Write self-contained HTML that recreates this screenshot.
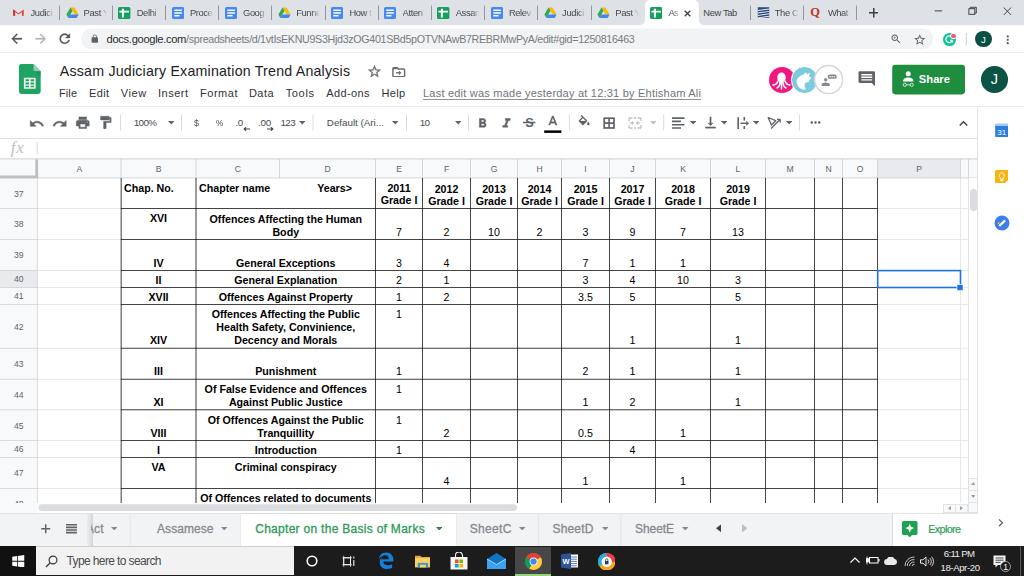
<!DOCTYPE html>
<html lang="en"><head><meta charset="utf-8"><title>Assam Judiciary Examination Trend Analysis - Google Sheets</title>
<style>
*{margin:0;padding:0;box-sizing:border-box}
html,body{width:1024px;height:576px;overflow:hidden;background:#fff}
body{position:relative;font-family:"Liberation Sans",sans-serif;}
div,svg,span.a{position:absolute}
.t{white-space:nowrap}
.b{font-weight:bold}
.c{text-align:center}
</style></head>
<body>
<div id="grid" style="left:0;top:158px;width:978px;height:355px;overflow:hidden;background:#fff">
<div style="left:0px;top:1px;width:978px;height:19px;background:#f8f9fa;"></div>
<div style="left:0px;top:1px;width:37px;height:345px;background:#f8f9fa;"></div>
<div style="left:878px;top:1px;width:82px;height:19px;background:#e8eaed;"></div>
<div style="left:0px;top:113px;width:37px;height:17px;background:#e8eaed;"></div>
<svg style="left:0;top:0" width="978" height="355" viewBox="0 0 978 355" fill="none"><path d="M37.5 50.5H968.5" stroke="#e2e2e2" stroke-width="0.8"/><path d="M37.5 81.5H968.5" stroke="#e2e2e2" stroke-width="0.8"/><path d="M37.5 112.5H968.5" stroke="#e2e2e2" stroke-width="0.8"/><path d="M37.5 129.5H968.5" stroke="#e2e2e2" stroke-width="0.8"/><path d="M37.5 146.5H968.5" stroke="#e2e2e2" stroke-width="0.8"/><path d="M37.5 190.25H968.5" stroke="#e2e2e2" stroke-width="0.8"/><path d="M37.5 221.25H968.5" stroke="#e2e2e2" stroke-width="0.8"/><path d="M37.5 251.75H968.5" stroke="#e2e2e2" stroke-width="0.8"/><path d="M37.5 282.5H968.5" stroke="#e2e2e2" stroke-width="0.8"/><path d="M37.5 299.5H968.5" stroke="#e2e2e2" stroke-width="0.8"/><path d="M37.5 330.5H968.5" stroke="#e2e2e2" stroke-width="0.8"/><path d="M121 20V346" stroke="#e2e2e2" stroke-width="0.8"/><path d="M196 20V346" stroke="#e2e2e2" stroke-width="0.8"/><path d="M375.5 20V346" stroke="#e2e2e2" stroke-width="0.8"/><path d="M422.5 20V346" stroke="#e2e2e2" stroke-width="0.8"/><path d="M470.5 20V346" stroke="#e2e2e2" stroke-width="0.8"/><path d="M517.5 20V346" stroke="#e2e2e2" stroke-width="0.8"/><path d="M561.5 20V346" stroke="#e2e2e2" stroke-width="0.8"/><path d="M609.5 20V346" stroke="#e2e2e2" stroke-width="0.8"/><path d="M655.5 20V346" stroke="#e2e2e2" stroke-width="0.8"/><path d="M710.5 20V346" stroke="#e2e2e2" stroke-width="0.8"/><path d="M765.5 20V346" stroke="#e2e2e2" stroke-width="0.8"/><path d="M814.5 20V346" stroke="#e2e2e2" stroke-width="0.8"/><path d="M842.5 20V346" stroke="#e2e2e2" stroke-width="0.8"/><path d="M877.5 20V346" stroke="#e2e2e2" stroke-width="0.8"/><path d="M960.5 20V346" stroke="#e2e2e2" stroke-width="0.8"/><path d="M968.5 20V346" stroke="#e2e2e2" stroke-width="0.8"/><path d="M0 0.9H978" stroke="#cfcfcf" stroke-width="1"/><path d="M0 19.95H978" stroke="#cccccc" stroke-width="0.8"/><path d="M37.4 1V346" stroke="#d2d2d2" stroke-width="0.8"/><path d="M121 1V20" stroke="#cccccc" stroke-width="0.8"/><path d="M196 1V20" stroke="#cccccc" stroke-width="0.8"/><path d="M279.5 1V20" stroke="#cccccc" stroke-width="0.8"/><path d="M375.5 1V20" stroke="#cccccc" stroke-width="0.8"/><path d="M422.5 1V20" stroke="#cccccc" stroke-width="0.8"/><path d="M470.5 1V20" stroke="#cccccc" stroke-width="0.8"/><path d="M517.5 1V20" stroke="#cccccc" stroke-width="0.8"/><path d="M561.5 1V20" stroke="#cccccc" stroke-width="0.8"/><path d="M609.5 1V20" stroke="#cccccc" stroke-width="0.8"/><path d="M655.5 1V20" stroke="#cccccc" stroke-width="0.8"/><path d="M710.5 1V20" stroke="#cccccc" stroke-width="0.8"/><path d="M765.5 1V20" stroke="#cccccc" stroke-width="0.8"/><path d="M814.5 1V20" stroke="#cccccc" stroke-width="0.8"/><path d="M842.5 1V20" stroke="#cccccc" stroke-width="0.8"/><path d="M877.5 1V20" stroke="#cccccc" stroke-width="0.8"/><path d="M960.5 1V20" stroke="#cccccc" stroke-width="0.8"/><path d="M968.5 1V20" stroke="#cccccc" stroke-width="0.8"/><path d="M0 50.5H37.5" stroke="#d2d2d2" stroke-width="0.8"/><path d="M0 81.5H37.5" stroke="#d2d2d2" stroke-width="0.8"/><path d="M0 112.5H37.5" stroke="#d2d2d2" stroke-width="0.8"/><path d="M0 129.5H37.5" stroke="#d2d2d2" stroke-width="0.8"/><path d="M0 146.5H37.5" stroke="#d2d2d2" stroke-width="0.8"/><path d="M0 190.25H37.5" stroke="#d2d2d2" stroke-width="0.8"/><path d="M0 221.25H37.5" stroke="#d2d2d2" stroke-width="0.8"/><path d="M0 251.75H37.5" stroke="#d2d2d2" stroke-width="0.8"/><path d="M0 282.5H37.5" stroke="#d2d2d2" stroke-width="0.8"/><path d="M0 299.5H37.5" stroke="#d2d2d2" stroke-width="0.8"/><path d="M0 330.5H37.5" stroke="#d2d2d2" stroke-width="0.8"/><path d="M0 18.8H38.2" stroke="#bfbfbf" stroke-width="2.8"/><path d="M36.7 1.3V19.9" stroke="#bfbfbf" stroke-width="2.8"/><path d="M121.2 20V348" stroke="#1a1a1a" stroke-width="0.8"/><path d="M196 20V348" stroke="#1a1a1a" stroke-width="0.8"/><path d="M375.5 20V348" stroke="#1a1a1a" stroke-width="0.8"/><path d="M422.5 20V348" stroke="#1a1a1a" stroke-width="0.8"/><path d="M470.5 20V348" stroke="#1a1a1a" stroke-width="0.8"/><path d="M517.5 20V348" stroke="#1a1a1a" stroke-width="0.8"/><path d="M561.5 20V348" stroke="#1a1a1a" stroke-width="0.8"/><path d="M609.5 20V348" stroke="#1a1a1a" stroke-width="0.8"/><path d="M655.5 20V348" stroke="#1a1a1a" stroke-width="0.8"/><path d="M710.5 20V348" stroke="#1a1a1a" stroke-width="0.8"/><path d="M765.5 20V348" stroke="#1a1a1a" stroke-width="0.8"/><path d="M814.5 20V348" stroke="#1a1a1a" stroke-width="0.8"/><path d="M842.5 20V348" stroke="#1a1a1a" stroke-width="0.8"/><path d="M877.5 20V348" stroke="#1a1a1a" stroke-width="0.8"/><path d="M120.8 50.5H877.9" stroke="#1a1a1a" stroke-width="0.8"/><path d="M120.8 81.5H877.9" stroke="#1a1a1a" stroke-width="0.8"/><path d="M120.8 112.5H877.9" stroke="#1a1a1a" stroke-width="0.8"/><path d="M120.8 129.5H877.9" stroke="#1a1a1a" stroke-width="0.8"/><path d="M120.8 146.5H877.9" stroke="#1a1a1a" stroke-width="0.8"/><path d="M120.8 190.25H877.9" stroke="#1a1a1a" stroke-width="0.8"/><path d="M120.8 221.25H877.9" stroke="#1a1a1a" stroke-width="0.8"/><path d="M120.8 251.75H877.9" stroke="#1a1a1a" stroke-width="0.8"/><path d="M120.8 282.5H877.9" stroke="#1a1a1a" stroke-width="0.8"/><path d="M120.8 299.5H877.9" stroke="#1a1a1a" stroke-width="0.8"/><path d="M120.8 330.5H877.9" stroke="#1a1a1a" stroke-width="0.8"/></svg>
<div class="t" style="left:69.25px;top:6.900000000000006px;font-size:8.6px;color:#5f6368;line-height:8.6px;width:20px;text-align:center;">A</div>
<div class="t" style="left:148.5px;top:6.900000000000006px;font-size:8.6px;color:#5f6368;line-height:8.6px;width:20px;text-align:center;">B</div>
<div class="t" style="left:227.75px;top:6.900000000000006px;font-size:8.6px;color:#5f6368;line-height:8.6px;width:20px;text-align:center;">C</div>
<div class="t" style="left:317.5px;top:6.900000000000006px;font-size:8.6px;color:#5f6368;line-height:8.6px;width:20px;text-align:center;">D</div>
<div class="t" style="left:389.0px;top:6.900000000000006px;font-size:8.6px;color:#5f6368;line-height:8.6px;width:20px;text-align:center;">E</div>
<div class="t" style="left:436.5px;top:6.900000000000006px;font-size:8.6px;color:#5f6368;line-height:8.6px;width:20px;text-align:center;">F</div>
<div class="t" style="left:484.0px;top:6.900000000000006px;font-size:8.6px;color:#5f6368;line-height:8.6px;width:20px;text-align:center;">G</div>
<div class="t" style="left:529.5px;top:6.900000000000006px;font-size:8.6px;color:#5f6368;line-height:8.6px;width:20px;text-align:center;">H</div>
<div class="t" style="left:575.5px;top:6.900000000000006px;font-size:8.6px;color:#5f6368;line-height:8.6px;width:20px;text-align:center;">I</div>
<div class="t" style="left:622.5px;top:6.900000000000006px;font-size:8.6px;color:#5f6368;line-height:8.6px;width:20px;text-align:center;">J</div>
<div class="t" style="left:673.0px;top:6.900000000000006px;font-size:8.6px;color:#5f6368;line-height:8.6px;width:20px;text-align:center;">K</div>
<div class="t" style="left:728.0px;top:6.900000000000006px;font-size:8.6px;color:#5f6368;line-height:8.6px;width:20px;text-align:center;">L</div>
<div class="t" style="left:780.0px;top:6.900000000000006px;font-size:8.6px;color:#5f6368;line-height:8.6px;width:20px;text-align:center;">M</div>
<div class="t" style="left:818.5px;top:6.900000000000006px;font-size:8.6px;color:#5f6368;line-height:8.6px;width:20px;text-align:center;">N</div>
<div class="t" style="left:850.0px;top:6.900000000000006px;font-size:8.6px;color:#5f6368;line-height:8.6px;width:20px;text-align:center;">O</div>
<div class="t" style="left:909.0px;top:6.900000000000006px;font-size:8.6px;color:#5f6368;line-height:8.6px;width:20px;text-align:center;">P</div>
<div class="t" style="left:0px;top:31.650000000000006px;font-size:8.6px;color:#5f6368;line-height:8.6px;width:37.5px;text-align:center;">37</div>
<div class="t" style="left:0px;top:62.400000000000006px;font-size:8.6px;color:#5f6368;line-height:8.6px;width:37.5px;text-align:center;">38</div>
<div class="t" style="left:0px;top:93.4px;font-size:8.6px;color:#5f6368;line-height:8.6px;width:37.5px;text-align:center;">39</div>
<div class="t" style="left:0px;top:117.39999999999998px;font-size:8.6px;color:#5f6368;line-height:8.6px;width:37.5px;text-align:center;">40</div>
<div class="t" style="left:0px;top:134.39999999999998px;font-size:8.6px;color:#5f6368;line-height:8.6px;width:37.5px;text-align:center;">41</div>
<div class="t" style="left:0px;top:164.77499999999998px;font-size:8.6px;color:#5f6368;line-height:8.6px;width:37.5px;text-align:center;">42</div>
<div class="t" style="left:0px;top:202.14999999999998px;font-size:8.6px;color:#5f6368;line-height:8.6px;width:37.5px;text-align:center;">43</div>
<div class="t" style="left:0px;top:232.89999999999998px;font-size:8.6px;color:#5f6368;line-height:8.6px;width:37.5px;text-align:center;">44</div>
<div class="t" style="left:0px;top:263.525px;font-size:8.6px;color:#5f6368;line-height:8.6px;width:37.5px;text-align:center;">45</div>
<div class="t" style="left:0px;top:287.4px;font-size:8.6px;color:#5f6368;line-height:8.6px;width:37.5px;text-align:center;">46</div>
<div class="t" style="left:0px;top:311.4px;font-size:8.6px;color:#5f6368;line-height:8.6px;width:37.5px;text-align:center;">47</div>
<div class="t" style="left:0px;top:342.4px;font-size:8.6px;color:#5f6368;line-height:8.6px;width:37.5px;text-align:center;">48</div>
<div class="t" style="left:124px;top:23.902845000000013px;font-size:10.67px;color:#000;line-height:12.6px;font-weight:bold;white-space:pre;">Chap. No.</div>
<div class="t" style="left:199px;top:23.902845000000013px;font-size:10.67px;color:#000;line-height:12.6px;font-weight:bold;white-space:pre;">Chapter name                Years&gt;</div>
<div class="t" style="left:375.5px;top:23.902845000000013px;font-size:10.67px;color:#000;line-height:12.6px;width:47.0px;text-align:center;font-weight:bold;white-space:pre;">2011<br>Grade I</div>
<div class="t" style="left:422.5px;top:24.602845000000002px;font-size:10.67px;color:#000;line-height:12.6px;width:48.0px;text-align:center;font-weight:bold;white-space:pre;">2012<br>Grade I</div>
<div class="t" style="left:470.5px;top:24.602845000000002px;font-size:10.67px;color:#000;line-height:12.6px;width:47.0px;text-align:center;font-weight:bold;white-space:pre;">2013<br>Grade I</div>
<div class="t" style="left:517.5px;top:24.602845000000002px;font-size:10.67px;color:#000;line-height:12.6px;width:44.0px;text-align:center;font-weight:bold;white-space:pre;">2014<br>Grade I</div>
<div class="t" style="left:561.5px;top:24.602845000000002px;font-size:10.67px;color:#000;line-height:12.6px;width:48.0px;text-align:center;font-weight:bold;white-space:pre;">2015<br>Grade I</div>
<div class="t" style="left:609.5px;top:24.602845000000002px;font-size:10.67px;color:#000;line-height:12.6px;width:46.0px;text-align:center;font-weight:bold;white-space:pre;">2017<br>Grade I</div>
<div class="t" style="left:655.5px;top:24.602845000000002px;font-size:10.67px;color:#000;line-height:12.6px;width:55.0px;text-align:center;font-weight:bold;white-space:pre;">2018<br>Grade I</div>
<div class="t" style="left:710.5px;top:24.602845000000002px;font-size:10.67px;color:#000;line-height:12.6px;width:55.0px;text-align:center;font-weight:bold;white-space:pre;">2019<br>Grade I</div>
<div class="t" style="left:121px;top:54.40284500000001px;font-size:10.67px;color:#000;line-height:12.6px;width:75px;text-align:center;font-weight:bold;white-space:pre;">XVI</div>
<div class="t" style="left:196px;top:55.00284500000001px;font-size:10.67px;color:#000;line-height:12.6px;width:179.5px;text-align:center;font-weight:bold;white-space:pre;">Offences Affecting the Human<br>Body</div>
<div class="t" style="left:121px;top:98.602845px;font-size:10.67px;color:#000;line-height:12.6px;width:75px;text-align:center;font-weight:bold;white-space:pre;">IV</div>
<div class="t" style="left:196px;top:98.602845px;font-size:10.67px;color:#000;line-height:12.6px;width:179.5px;text-align:center;font-weight:bold;white-space:pre;">General Exceptions</div>
<div class="t" style="left:121px;top:115.602845px;font-size:10.67px;color:#000;line-height:12.6px;width:75px;text-align:center;font-weight:bold;white-space:pre;">II</div>
<div class="t" style="left:196px;top:115.602845px;font-size:10.67px;color:#000;line-height:12.6px;width:179.5px;text-align:center;font-weight:bold;white-space:pre;">General Explanation</div>
<div class="t" style="left:121px;top:132.602845px;font-size:10.67px;color:#000;line-height:12.6px;width:75px;text-align:center;font-weight:bold;white-space:pre;">XVII</div>
<div class="t" style="left:196px;top:132.602845px;font-size:10.67px;color:#000;line-height:12.6px;width:179.5px;text-align:center;font-weight:bold;white-space:pre;">Offences Against Property</div>
<div class="t" style="left:121px;top:176.352845px;font-size:10.67px;color:#000;line-height:12.6px;width:75px;text-align:center;font-weight:bold;white-space:pre;">XIV</div>
<div class="t" style="left:196px;top:149.85284500000006px;font-size:10.67px;color:#000;line-height:13.2px;width:179.5px;text-align:center;font-weight:bold;white-space:pre;">Offences Affecting the Public<br>Health Safety, Convinience,<br>Decency and Morals</div>
<div class="t" style="left:121px;top:207.352845px;font-size:10.67px;color:#000;line-height:12.6px;width:75px;text-align:center;font-weight:bold;white-space:pre;">III</div>
<div class="t" style="left:196px;top:207.352845px;font-size:10.67px;color:#000;line-height:12.6px;width:179.5px;text-align:center;font-weight:bold;white-space:pre;">Punishment</div>
<div class="t" style="left:121px;top:237.852845px;font-size:10.67px;color:#000;line-height:12.6px;width:75px;text-align:center;font-weight:bold;white-space:pre;">XI</div>
<div class="t" style="left:196px;top:225.25284499999998px;font-size:10.67px;color:#000;line-height:12.6px;width:179.5px;text-align:center;font-weight:bold;white-space:pre;">Of False Evidence and Offences<br>Against Public Justice</div>
<div class="t" style="left:121px;top:268.602845px;font-size:10.67px;color:#000;line-height:12.6px;width:75px;text-align:center;font-weight:bold;white-space:pre;">VIII</div>
<div class="t" style="left:196px;top:256.002845px;font-size:10.67px;color:#000;line-height:12.6px;width:179.5px;text-align:center;font-weight:bold;white-space:pre;">Of Offences Against the Public<br>Tranquillity</div>
<div class="t" style="left:121px;top:285.602845px;font-size:10.67px;color:#000;line-height:12.6px;width:75px;text-align:center;font-weight:bold;white-space:pre;">I</div>
<div class="t" style="left:196px;top:285.602845px;font-size:10.67px;color:#000;line-height:12.6px;width:179.5px;text-align:center;font-weight:bold;white-space:pre;">Introduction</div>
<div class="t" style="left:121px;top:303.40284499999996px;font-size:10.67px;color:#000;line-height:12.6px;width:75px;text-align:center;font-weight:bold;white-space:pre;">VA</div>
<div class="t" style="left:196px;top:303.40284499999996px;font-size:10.67px;color:#000;line-height:12.6px;width:179.5px;text-align:center;font-weight:bold;white-space:pre;">Criminal conspiracy</div>
<div class="t" style="left:196px;top:334.40284499999996px;font-size:10.67px;color:#000;line-height:12.6px;width:179.5px;text-align:center;font-weight:bold;white-space:pre;">Of Offences related to documents</div>
<div class="t" style="left:375.5px;top:67.602845px;font-size:10.67px;color:#000;line-height:12.6px;width:47.0px;text-align:center;white-space:pre;">7</div>
<div class="t" style="left:422.5px;top:67.602845px;font-size:10.67px;color:#000;line-height:12.6px;width:48.0px;text-align:center;white-space:pre;">2</div>
<div class="t" style="left:470.5px;top:67.602845px;font-size:10.67px;color:#000;line-height:12.6px;width:47.0px;text-align:center;white-space:pre;">10</div>
<div class="t" style="left:517.5px;top:67.602845px;font-size:10.67px;color:#000;line-height:12.6px;width:44.0px;text-align:center;white-space:pre;">2</div>
<div class="t" style="left:561.5px;top:67.602845px;font-size:10.67px;color:#000;line-height:12.6px;width:48.0px;text-align:center;white-space:pre;">3</div>
<div class="t" style="left:609.5px;top:67.602845px;font-size:10.67px;color:#000;line-height:12.6px;width:46.0px;text-align:center;white-space:pre;">9</div>
<div class="t" style="left:655.5px;top:67.602845px;font-size:10.67px;color:#000;line-height:12.6px;width:55.0px;text-align:center;white-space:pre;">7</div>
<div class="t" style="left:710.5px;top:67.602845px;font-size:10.67px;color:#000;line-height:12.6px;width:55.0px;text-align:center;white-space:pre;">13</div>
<div class="t" style="left:375.5px;top:98.602845px;font-size:10.67px;color:#000;line-height:12.6px;width:47.0px;text-align:center;white-space:pre;">3</div>
<div class="t" style="left:422.5px;top:98.602845px;font-size:10.67px;color:#000;line-height:12.6px;width:48.0px;text-align:center;white-space:pre;">4</div>
<div class="t" style="left:561.5px;top:98.602845px;font-size:10.67px;color:#000;line-height:12.6px;width:48.0px;text-align:center;white-space:pre;">7</div>
<div class="t" style="left:609.5px;top:98.602845px;font-size:10.67px;color:#000;line-height:12.6px;width:46.0px;text-align:center;white-space:pre;">1</div>
<div class="t" style="left:655.5px;top:98.602845px;font-size:10.67px;color:#000;line-height:12.6px;width:55.0px;text-align:center;white-space:pre;">1</div>
<div class="t" style="left:375.5px;top:115.602845px;font-size:10.67px;color:#000;line-height:12.6px;width:47.0px;text-align:center;white-space:pre;">2</div>
<div class="t" style="left:422.5px;top:115.602845px;font-size:10.67px;color:#000;line-height:12.6px;width:48.0px;text-align:center;white-space:pre;">1</div>
<div class="t" style="left:561.5px;top:115.602845px;font-size:10.67px;color:#000;line-height:12.6px;width:48.0px;text-align:center;white-space:pre;">3</div>
<div class="t" style="left:609.5px;top:115.602845px;font-size:10.67px;color:#000;line-height:12.6px;width:46.0px;text-align:center;white-space:pre;">4</div>
<div class="t" style="left:655.5px;top:115.602845px;font-size:10.67px;color:#000;line-height:12.6px;width:55.0px;text-align:center;white-space:pre;">10</div>
<div class="t" style="left:710.5px;top:115.602845px;font-size:10.67px;color:#000;line-height:12.6px;width:55.0px;text-align:center;white-space:pre;">3</div>
<div class="t" style="left:375.5px;top:132.602845px;font-size:10.67px;color:#000;line-height:12.6px;width:47.0px;text-align:center;white-space:pre;">1</div>
<div class="t" style="left:422.5px;top:132.602845px;font-size:10.67px;color:#000;line-height:12.6px;width:48.0px;text-align:center;white-space:pre;">2</div>
<div class="t" style="left:561.5px;top:132.602845px;font-size:10.67px;color:#000;line-height:12.6px;width:48.0px;text-align:center;white-space:pre;">3.5</div>
<div class="t" style="left:609.5px;top:132.602845px;font-size:10.67px;color:#000;line-height:12.6px;width:46.0px;text-align:center;white-space:pre;">5</div>
<div class="t" style="left:710.5px;top:132.602845px;font-size:10.67px;color:#000;line-height:12.6px;width:55.0px;text-align:center;white-space:pre;">5</div>
<div class="t" style="left:375.5px;top:150.40284499999996px;font-size:10.67px;color:#000;line-height:12.6px;width:47.0px;text-align:center;white-space:pre;">1</div>
<div class="t" style="left:609.5px;top:176.352845px;font-size:10.67px;color:#000;line-height:12.6px;width:46.0px;text-align:center;white-space:pre;">1</div>
<div class="t" style="left:710.5px;top:176.352845px;font-size:10.67px;color:#000;line-height:12.6px;width:55.0px;text-align:center;white-space:pre;">1</div>
<div class="t" style="left:375.5px;top:207.352845px;font-size:10.67px;color:#000;line-height:12.6px;width:47.0px;text-align:center;white-space:pre;">1</div>
<div class="t" style="left:561.5px;top:207.352845px;font-size:10.67px;color:#000;line-height:12.6px;width:48.0px;text-align:center;white-space:pre;">2</div>
<div class="t" style="left:609.5px;top:207.352845px;font-size:10.67px;color:#000;line-height:12.6px;width:46.0px;text-align:center;white-space:pre;">1</div>
<div class="t" style="left:710.5px;top:207.352845px;font-size:10.67px;color:#000;line-height:12.6px;width:55.0px;text-align:center;white-space:pre;">1</div>
<div class="t" style="left:375.5px;top:225.15284499999996px;font-size:10.67px;color:#000;line-height:12.6px;width:47.0px;text-align:center;white-space:pre;">1</div>
<div class="t" style="left:561.5px;top:237.852845px;font-size:10.67px;color:#000;line-height:12.6px;width:48.0px;text-align:center;white-space:pre;">1</div>
<div class="t" style="left:609.5px;top:237.852845px;font-size:10.67px;color:#000;line-height:12.6px;width:46.0px;text-align:center;white-space:pre;">2</div>
<div class="t" style="left:710.5px;top:237.852845px;font-size:10.67px;color:#000;line-height:12.6px;width:55.0px;text-align:center;white-space:pre;">1</div>
<div class="t" style="left:375.5px;top:255.65284499999996px;font-size:10.67px;color:#000;line-height:12.6px;width:47.0px;text-align:center;white-space:pre;">1</div>
<div class="t" style="left:422.5px;top:268.602845px;font-size:10.67px;color:#000;line-height:12.6px;width:48.0px;text-align:center;white-space:pre;">2</div>
<div class="t" style="left:561.5px;top:268.602845px;font-size:10.67px;color:#000;line-height:12.6px;width:48.0px;text-align:center;white-space:pre;">0.5</div>
<div class="t" style="left:655.5px;top:268.602845px;font-size:10.67px;color:#000;line-height:12.6px;width:55.0px;text-align:center;white-space:pre;">1</div>
<div class="t" style="left:375.5px;top:285.602845px;font-size:10.67px;color:#000;line-height:12.6px;width:47.0px;text-align:center;white-space:pre;">1</div>
<div class="t" style="left:609.5px;top:285.602845px;font-size:10.67px;color:#000;line-height:12.6px;width:46.0px;text-align:center;white-space:pre;">4</div>
<div class="t" style="left:422.5px;top:316.602845px;font-size:10.67px;color:#000;line-height:12.6px;width:48.0px;text-align:center;white-space:pre;">4</div>
<div class="t" style="left:561.5px;top:316.602845px;font-size:10.67px;color:#000;line-height:12.6px;width:48.0px;text-align:center;white-space:pre;">1</div>
<div class="t" style="left:655.5px;top:316.602845px;font-size:10.67px;color:#000;line-height:12.6px;width:55.0px;text-align:center;white-space:pre;">1</div>
<svg style="left:870px;top:105px" width="100" height="30" viewBox="0 0 100 30" fill="none"><rect x="7.700" y="7.600" width="82.800" height="16.900" stroke="#1a73e8" stroke-width="1.600"/><rect x="86.600" y="21.100" width="6.600" height="6.600" fill="#fff"/><rect x="87.300" y="21.800" width="5.400" height="5.400" fill="#1a73e8"/></svg>
<div style="left:0px;top:345px;width:978px;height:10px;background:#fff;"></div>
<div style="left:968px;top:20px;width:10px;height:326px;background:#fff;border-left:1px solid #e6e6e6;"></div>
<div style="left:969.5px;top:31px;width:7px;height:22px;background:#dadce0;border-radius:4px;"></div>
<svg style="left:38px;top:345px" width="482" height="10" viewBox="0 0 482 10"><rect x="0.500" y="1.300" width="478.500" height="6.600" rx="3.300" fill="#dadce0"/></svg>
<div style="left:0px;top:345px;width:37px;height:10px;background:#f8f9fa;"></div>
</div>
<div style="left:0px;top:0px;width:1024px;height:25px;background:#dee1e6;"></div>
<div style="left:0px;top:25px;width:1024px;height:1px;background:#f9fafb;"></div>
<div style="left:0px;top:26px;width:1024px;height:27px;background:#fff;"></div>
<div style="left:0px;top:52px;width:1024px;height:1px;background:#ebecee;"></div>
<div style="left:977px;top:107px;width:47px;height:439px;background:#fff;border-left:1px solid #e3e4e6;"></div>
<div style="left:0px;top:106px;width:1024px;height:1px;background:#e8eaed;"></div>
<div style="left:0px;top:138px;width:978px;height:1px;background:#e1e2e4;"></div>
<div style="left:0px;top:513px;width:978px;height:33px;background:#f1f3f4;border-top:1px solid #e3e4e6;"></div>
<div style="left:0px;top:546px;width:1024px;height:30px;background:#1c1c1c;"></div>
<svg style="left:639.0px;top:0px;" width="65.8" height="26" viewBox="0 0 65.8 26"><path d="M0 25 Q6 25 6 19 V5.500 Q6 0 11.500 0 H54.3 Q59.8 0 59.8 5.500 V19 Q59.8 25 65.8 25 V26 H0 Z" fill="#fff"/></svg>
<svg style="left:12.399999999999999px;top:6px;" width="13" height="13" viewBox="0 0 16 16"><path d="M1.5 12V4.2L8 9l6.500-4.800V12h-2.300V7.300L8 10.600 3.800 7.300V12z" fill="#ea4335"/><path d="M1.500 4.200V12h2.300V5.600z" fill="#d93025"/></svg>
<div class="t" style="left:30.4px;top:7.24px;font-size:9.4px;color:#45494d;line-height:11.4px;letter-spacing:-0.312px;overflow:hidden;width:22.9px;height:14px;-webkit-mask-image:linear-gradient(90deg,#000 0,#000 15.9px,transparent 23.9px);mask-image:linear-gradient(90deg,#000 0,#000 15.9px,transparent 23.9px);">Judici</div>
<svg style="left:57.8px;top:5px;" width="3" height="16" viewBox="0 0 3 16"><path d="M1.500 0.600V15" stroke="#8a8d93" stroke-width="0.900"/></svg>
<svg style="left:65.57000000000001px;top:6px;" width="13" height="13" viewBox="0 0 16 17"><path d="M5.400 1.800h5.200L16 11.200h-5.200z" fill="#fbbc04"/><path d="M5.400 1.800L0 11.200l2.600 4.500L8 6.300z" fill="#34a853"/><path d="M2.600 15.700h10.800l2.600-4.500H5.200z" fill="#4285f4"/></svg>
<div class="t" style="left:83.6px;top:7.24px;font-size:9.4px;color:#45494d;line-height:11.4px;letter-spacing:-0.358px;overflow:hidden;width:22.9px;height:14px;-webkit-mask-image:linear-gradient(90deg,#000 0,#000 15.9px,transparent 23.9px);mask-image:linear-gradient(90deg,#000 0,#000 15.9px,transparent 23.9px);">Past Y</div>
<svg style="left:110.9px;top:5px;" width="3" height="16" viewBox="0 0 3 16"><path d="M1.500 0.600V15" stroke="#8a8d93" stroke-width="0.900"/></svg>
<svg style="left:118.33999999999999px;top:6.8px;" width="12.4" height="12" viewBox="0 0 12.400 12"><rect x="0" y="0" width="12.400" height="12" rx="1.600" fill="#16a05d"/><path d="M3.900 1.700h2v2.100h5v1.800h-5v4.800h-2V5.600H1.400V3.800h2.500z" fill="#fff"/></svg>
<div class="t" style="left:136.7px;top:7.24px;font-size:9.4px;color:#45494d;line-height:11.4px;letter-spacing:-0.348px;overflow:hidden;width:22.9px;height:14px;-webkit-mask-image:linear-gradient(90deg,#000 0,#000 15.9px,transparent 23.9px);mask-image:linear-gradient(90deg,#000 0,#000 15.9px,transparent 23.9px);">Delhi</div>
<svg style="left:164.1px;top:5px;" width="3" height="16" viewBox="0 0 3 16"><path d="M1.500 0.600V15" stroke="#8a8d93" stroke-width="0.900"/></svg>
<svg style="left:171.51px;top:6.8px;" width="12.2" height="12" viewBox="0 0 12.200 12"><rect x="0" y="0" width="12.200" height="12" rx="1.600" fill="#4688f4"/><path d="M2.300 2.500h7.600v1.500H2.300z M2.300 5.250h7.600v1.500H2.300z M2.300 8h5.200v1.500H2.300z" fill="#fff"/></svg>
<div class="t" style="left:189.9px;top:7.24px;font-size:9.4px;color:#45494d;line-height:11.4px;letter-spacing:-0.399px;overflow:hidden;width:22.9px;height:14px;-webkit-mask-image:linear-gradient(90deg,#000 0,#000 15.9px,transparent 23.9px);mask-image:linear-gradient(90deg,#000 0,#000 15.9px,transparent 23.9px);">Proce</div>
<svg style="left:217.3px;top:5px;" width="3" height="16" viewBox="0 0 3 16"><path d="M1.500 0.600V15" stroke="#8a8d93" stroke-width="0.900"/></svg>
<svg style="left:224.68px;top:6.8px;" width="12.2" height="12" viewBox="0 0 12.200 12"><rect x="0" y="0" width="12.200" height="12" rx="1.600" fill="#4688f4"/><path d="M2.300 2.500h7.600v1.500H2.300z M2.300 5.250h7.600v1.500H2.300z M2.300 8h5.200v1.500H2.300z" fill="#fff"/></svg>
<div class="t" style="left:243.1px;top:7.24px;font-size:9.4px;color:#45494d;line-height:11.4px;letter-spacing:-0.498px;overflow:hidden;width:22.9px;height:14px;-webkit-mask-image:linear-gradient(90deg,#000 0,#000 15.9px,transparent 23.9px);mask-image:linear-gradient(90deg,#000 0,#000 15.9px,transparent 23.9px);">Goog</div>
<svg style="left:270.4px;top:5px;" width="3" height="16" viewBox="0 0 3 16"><path d="M1.500 0.600V15" stroke="#8a8d93" stroke-width="0.900"/></svg>
<svg style="left:278.25000000000006px;top:6px;" width="13" height="13" viewBox="0 0 16 17"><path d="M5.400 1.800h5.200L16 11.200h-5.200z" fill="#fbbc04"/><path d="M5.400 1.800L0 11.200l2.600 4.500L8 6.300z" fill="#34a853"/><path d="M2.600 15.700h10.800l2.600-4.500H5.200z" fill="#4285f4"/></svg>
<div class="t" style="left:296.3px;top:7.24px;font-size:9.4px;color:#45494d;line-height:11.4px;letter-spacing:-0.433px;overflow:hidden;width:22.9px;height:14px;-webkit-mask-image:linear-gradient(90deg,#000 0,#000 15.9px,transparent 23.9px);mask-image:linear-gradient(90deg,#000 0,#000 15.9px,transparent 23.9px);">Funne</div>
<svg style="left:323.6px;top:5px;" width="3" height="16" viewBox="0 0 3 16"><path d="M1.500 0.600V15" stroke="#8a8d93" stroke-width="0.900"/></svg>
<svg style="left:331.02000000000004px;top:6.8px;" width="12.2" height="12" viewBox="0 0 12.200 12"><rect x="0" y="0" width="12.200" height="12" rx="1.600" fill="#4688f4"/><path d="M2.300 2.500h7.600v1.500H2.300z M2.300 5.250h7.600v1.500H2.300z M2.300 8h5.200v1.500H2.300z" fill="#fff"/></svg>
<div class="t" style="left:349.4px;top:7.24px;font-size:9.4px;color:#45494d;line-height:11.4px;letter-spacing:-0.39px;overflow:hidden;width:22.9px;height:14px;-webkit-mask-image:linear-gradient(90deg,#000 0,#000 15.9px,transparent 23.9px);mask-image:linear-gradient(90deg,#000 0,#000 15.9px,transparent 23.9px);">How t</div>
<svg style="left:376.8px;top:5px;" width="3" height="16" viewBox="0 0 3 16"><path d="M1.500 0.600V15" stroke="#8a8d93" stroke-width="0.900"/></svg>
<svg style="left:384.19000000000005px;top:6.8px;" width="12.2" height="12" viewBox="0 0 12.200 12"><rect x="0" y="0" width="12.200" height="12" rx="1.600" fill="#4688f4"/><path d="M2.300 2.500h7.600v1.500H2.300z M2.300 5.250h7.600v1.500H2.300z M2.300 8h5.200v1.500H2.300z" fill="#fff"/></svg>
<div class="t" style="left:402.6px;top:7.24px;font-size:9.4px;color:#45494d;line-height:11.4px;letter-spacing:-0.357px;overflow:hidden;width:22.9px;height:14px;-webkit-mask-image:linear-gradient(90deg,#000 0,#000 15.9px,transparent 23.9px);mask-image:linear-gradient(90deg,#000 0,#000 15.9px,transparent 23.9px);">Atten</div>
<svg style="left:430.0px;top:5px;" width="3" height="16" viewBox="0 0 3 16"><path d="M1.500 0.600V15" stroke="#8a8d93" stroke-width="0.900"/></svg>
<svg style="left:437.36000000000007px;top:6.8px;" width="12.4" height="12" viewBox="0 0 12.400 12"><rect x="0" y="0" width="12.400" height="12" rx="1.600" fill="#16a05d"/><path d="M3.900 1.700h2v2.100h5v1.800h-5v4.800h-2V5.600H1.400V3.800h2.500z" fill="#fff"/></svg>
<div class="t" style="left:455.8px;top:7.24px;font-size:9.4px;color:#45494d;line-height:11.4px;letter-spacing:-0.425px;overflow:hidden;width:22.9px;height:14px;-webkit-mask-image:linear-gradient(90deg,#000 0,#000 15.9px,transparent 23.9px);mask-image:linear-gradient(90deg,#000 0,#000 15.9px,transparent 23.9px);">Assan</div>
<svg style="left:483.1px;top:5px;" width="3" height="16" viewBox="0 0 3 16"><path d="M1.500 0.600V15" stroke="#8a8d93" stroke-width="0.900"/></svg>
<svg style="left:490.5300000000001px;top:6.8px;" width="12.2" height="12" viewBox="0 0 12.200 12"><rect x="0" y="0" width="12.200" height="12" rx="1.600" fill="#4688f4"/><path d="M2.300 2.500h7.600v1.500H2.300z M2.300 5.250h7.600v1.500H2.300z M2.300 8h5.200v1.500H2.300z" fill="#fff"/></svg>
<div class="t" style="left:508.9px;top:7.24px;font-size:9.4px;color:#45494d;line-height:11.4px;letter-spacing:-0.391px;overflow:hidden;width:22.9px;height:14px;-webkit-mask-image:linear-gradient(90deg,#000 0,#000 15.9px,transparent 23.9px);mask-image:linear-gradient(90deg,#000 0,#000 15.9px,transparent 23.9px);">Relev</div>
<svg style="left:536.3px;top:5px;" width="3" height="16" viewBox="0 0 3 16"><path d="M1.500 0.600V15" stroke="#8a8d93" stroke-width="0.900"/></svg>
<svg style="left:544.1px;top:6px;" width="13" height="13" viewBox="0 0 16 17"><path d="M5.400 1.800h5.200L16 11.200h-5.200z" fill="#fbbc04"/><path d="M5.400 1.800L0 11.200l2.600 4.500L8 6.300z" fill="#34a853"/><path d="M2.600 15.700h10.800l2.600-4.500H5.200z" fill="#4285f4"/></svg>
<div class="t" style="left:562.1px;top:7.24px;font-size:9.4px;color:#45494d;line-height:11.4px;letter-spacing:-0.312px;overflow:hidden;width:22.9px;height:14px;-webkit-mask-image:linear-gradient(90deg,#000 0,#000 15.9px,transparent 23.9px);mask-image:linear-gradient(90deg,#000 0,#000 15.9px,transparent 23.9px);">Judici</div>
<svg style="left:589.5px;top:5px;" width="3" height="16" viewBox="0 0 3 16"><path d="M1.500 0.600V15" stroke="#8a8d93" stroke-width="0.900"/></svg>
<svg style="left:597.27px;top:6px;" width="13" height="13" viewBox="0 0 16 17"><path d="M5.400 1.800h5.200L16 11.200h-5.200z" fill="#fbbc04"/><path d="M5.400 1.800L0 11.200l2.600 4.500L8 6.300z" fill="#34a853"/><path d="M2.600 15.700h10.800l2.600-4.500H5.200z" fill="#4285f4"/></svg>
<div class="t" style="left:615.3px;top:7.24px;font-size:9.4px;color:#45494d;line-height:11.4px;letter-spacing:-0.358px;overflow:hidden;width:22.9px;height:14px;-webkit-mask-image:linear-gradient(90deg,#000 0,#000 15.9px,transparent 23.9px);mask-image:linear-gradient(90deg,#000 0,#000 15.9px,transparent 23.9px);">Past Y</div>
<svg style="left:650.04px;top:6.8px;" width="12.4" height="12" viewBox="0 0 12.400 12"><rect x="0" y="0" width="12.400" height="12" rx="1.600" fill="#16a05d"/><path d="M3.900 1.700h2v2.100h5v1.800h-5v4.800h-2V5.600H1.400V3.800h2.500z" fill="#fff"/></svg>
<div class="t" style="left:668.4px;top:7.24px;font-size:9.4px;color:#45494d;line-height:11.4px;letter-spacing:-0.713px;overflow:hidden;width:12.0px;height:14px;-webkit-mask-image:linear-gradient(90deg,#000 0,#000 5.0px,transparent 13.0px);mask-image:linear-gradient(90deg,#000 0,#000 5.0px,transparent 13.0px);">As</div>
<div class="t" style="left:703.3px;top:7.24px;font-size:9.4px;color:#45494d;line-height:11.4px;letter-spacing:-0.4px;">New Tab</div>
<svg style="left:749.0px;top:5px;" width="3" height="16" viewBox="0 0 3 16"><path d="M1.500 0.600V15" stroke="#8a8d93" stroke-width="0.900"/></svg>
<svg style="left:756.78px;top:6px;" width="13" height="13" viewBox="0 0 16 16"><rect x="1" y="1.500" width="14" height="13" fill="#2d4a7c"/><path d="M1 5l14-2v1.200l-14 2z M1 8l14-2v1.200l-14 2z M1 11l14-2v1.200l-14 2z M1 14l14-2v1.200l-14 2z" fill="#e8edf5"/></svg>
<div class="t" style="left:774.8px;top:7.24px;font-size:9.4px;color:#45494d;line-height:11.4px;letter-spacing:-0.416px;overflow:hidden;width:22.9px;height:14px;-webkit-mask-image:linear-gradient(90deg,#000 0,#000 15.9px,transparent 23.9px);mask-image:linear-gradient(90deg,#000 0,#000 15.9px,transparent 23.9px);">The C</div>
<svg style="left:802.1px;top:5px;" width="3" height="16" viewBox="0 0 3 16"><path d="M1.500 0.600V15" stroke="#8a8d93" stroke-width="0.900"/></svg>
<div class="t" style="left:810.25px;top:5.7px;font-size:12.5px;color:#c3341d;line-height:12.5px;font-family:'Liberation Serif',serif;font-weight:bold;">Q</div>
<div class="t" style="left:828.0px;top:7.24px;font-size:9.4px;color:#45494d;line-height:11.4px;letter-spacing:-0.475px;overflow:hidden;width:22.9px;height:14px;-webkit-mask-image:linear-gradient(90deg,#000 0,#000 15.9px,transparent 23.9px);mask-image:linear-gradient(90deg,#000 0,#000 15.9px,transparent 23.9px);">What</div>
<svg style="left:855.3px;top:5px;" width="3" height="16" viewBox="0 0 3 16"><path d="M1.500 0.600V15" stroke="#8a8d93" stroke-width="0.900"/></svg>
<svg style="left:683.5px;top:9.7px;" width="7" height="7" viewBox="0 0 7 7"><path d="M0.700 0.700L6.300 6.300M6.300 0.700L0.700 6.300" stroke="#3c4043" stroke-width="1.350" fill="none"/></svg>
<svg style="left:868.7px;top:8px;" width="9.5" height="9.5" viewBox="0 0 9.500 9.500"><path d="M4.750 0V9.500M0 4.750H9.500" stroke="#3c4043" stroke-width="1.500" fill="none"/></svg>
<svg style="left:933.5px;top:8px;" width="10" height="6" viewBox="0 0 10 6"><path d="M0.700 2.900H8.200" stroke="#333" stroke-width="0.900"/></svg>
<svg style="left:967.5px;top:6px;" width="10" height="10" viewBox="0 0 10 10"><path d="M2.300 2.500V1.300H8.300V7.000H7" stroke="#333" stroke-width="0.900" fill="none"/><rect x="0.900" y="2.700" width="5.900" height="5.600" stroke="#333" stroke-width="0.900" fill="none"/></svg>
<svg style="left:1002.5px;top:6.5px;" width="9" height="9" viewBox="0 0 9 9"><path d="M0.800 0.600L8.000 7.900M8.000 0.600L0.800 7.900" stroke="#333" stroke-width="0.900" fill="none"/></svg>
<svg style="left:8.7px;top:31.4px;" width="15.5" height="15.5" viewBox="0 0 24 24"><path d="M20 11H7.83l5.59-5.59L12 4l-8 8 8 8 1.41-1.41L7.83 13H20v-2z" fill="#55595e" stroke="#55595e" stroke-width="0.500"/></svg>
<svg style="left:32.7px;top:31.4px;" width="15.5" height="15.5" viewBox="0 0 24 24"><path d="M12 4l-1.41 1.41L16.17 11H4v2h12.17l-5.58 5.59L12 20l8-8z" fill="#b3b6ba" stroke="#b3b6ba" stroke-width="0.500"/></svg>
<svg style="left:56.7px;top:31.2px;" width="15.5" height="15.5" viewBox="0 0 24 24"><path d="M17.65 6.35C16.2 4.9 14.21 4 12 4c-4.42 0-7.99 3.58-7.99 8s3.57 8 7.99 8c3.73 0 6.84-2.55 7.73-6h-2.08c-.82 2.33-3.04 4-5.65 4-3.31 0-6-2.69-6-6s2.69-6 6-6c1.66 0 3.14.69 4.22 1.78L13 11h7V4l-2.35 2.35z" fill="#55595e" stroke="#55595e" stroke-width="0.500"/></svg>
<svg style="left:81px;top:28px;" width="852.2" height="22" viewBox="0 0 852.200 22"><rect x="0" y="0.450" width="852.200" height="20.800" rx="10.400" fill="#f1f3f4"/></svg>
<svg style="left:89.5px;top:33.7px;" width="9.6" height="9.6" viewBox="0 0 24 24"><path d="M18 8h-1V6c0-2.76-2.24-5-5-5S7 3.24 7 6v2H6c-1.1 0-2 .9-2 2v10c0 1.1.9 2 2 2h12c1.1 0 2-.9 2-2V10c0-1.1-.9-2-2-2zm-3 0H9V6c0-1.66 1.34-3 3-3s3 1.34 3 3v2z" fill="#5f6368"/></svg>
<div class="t" style="left:106.6px;top:33.52px;font-size:11.2px;color:#000;line-height:11.2px;"><span style="color:#2a2c2f;letter-spacing:-0.338px">docs.google.com</span><span style="color:#777b80;letter-spacing:-0.316px;font-size:10.7px">/spreadsheets/d/1vtIsEKNU9S3Hjd3zOG401SBd5pOTVNAwB7REBRMwPyA/edit#gid=1250816463</span></div>
<svg style="left:889.5px;top:33px;" width="12" height="12" viewBox="0 0 24 24"><path d="M15.5 14h-.79l-.28-.27C15.41 12.59 16 11.11 16 9.5 16 5.91 13.09 3 9.5 3S3 5.91 3 9.5 5.91 16 9.5 16c1.61 0 3.09-.59 4.23-1.57l.27.28v.79l5 4.99L20.49 19l-4.99-5zm-6 0C7.01 14 5 11.99 5 9.5S7.01 5 9.5 5 14 7.01 14 9.5 11.99 14 9.5 14z" fill="#5f6368"/><path d="M12 10h-2v2H9v-2H7V9h2V7h1v2h2v1z" fill="#5f6368"/></svg>
<svg style="left:912.8px;top:32.5px;" width="13.5" height="13.5" viewBox="0 0 24 24"><path d="M22 9.24l-7.19-.62L12 2 9.19 8.63 2 9.24l5.46 4.73L5.82 21 12 17.27 18.18 21l-1.63-7.03L22 9.24zM12 15.4l-3.76 2.27 1-4.28-3.32-2.88 4.38-.38L12 6.1l1.71 4.04 4.38.38-3.32 2.88 1 4.28L12 15.4z" fill="#5f6368"/></svg>
<div style="left:943px;top:33.2px;width:12.6px;height:12.6px;background:#15c39a;border-radius:50%;"></div>
<svg style="left:943px;top:33.2px;" width="12.6" height="12.6" viewBox="0 0 14 14"><path d="M10.400 8.200H8.200M10.400 8.200v2.300M10.300 8.400A3.700 3.700 0 1 1 9.600 4.400" stroke="#fff" stroke-width="1.300" fill="none"/></svg>
<div style="left:950.2px;top:32.5px;width:6.4px;height:6.4px;background:#ef5a72;border-radius:50%;border:0.7px solid #fff;"></div>
<svg style="left:964px;top:33px;" width="4" height="13" viewBox="0 0 4 13"><path d="M2.3 0V12.5" stroke="#c9ccd1" stroke-width="1"/></svg>
<div style="left:975.2px;top:30.7px;width:16.6px;height:16.6px;background:#0a4f43;border-radius:50%;"></div>
<div class="t" style="left:975.2px;top:34.77px;font-size:9.6px;color:#fff;line-height:9.6px;width:16.6px;text-align:center;">J</div>
<svg style="left:1001px;top:32.5px;" width="13.5" height="13.5" viewBox="0 0 24 24"><path d="M12 8c1.1 0 2-.9 2-2s-.9-2-2-2-2 .9-2 2 .9 2 2 2zm0 2c-1.1 0-2 .9-2 2s.9 2 2 2 2-.9 2-2-.9-2-2-2zm0 6c-1.1 0-2 .9-2 2s.9 2 2 2 2-.9 2-2-.9-2-2-2z" fill="#5f6368"/></svg>
<svg style="left:19.2px;top:64.2px;" width="21.7" height="30" viewBox="0 0 21.700 30"><path d="M2.500 0H14.500l7.200 7.200v20.300a2.500 2.500 0 0 1-2.500 2.500h-16.700A2.500 2.500 0 0 1 0 27.500v-25A2.500 2.500 0 0 1 2.500 0z" fill="#1fa463"/><path d="M14.500 0l7.200 7.200h-5.200a2 2 0 0 1-2-2z" fill="#8ed1b1"/><path d="M14.500 7.200h7.200v5z" fill="#188a52" opacity="0.500"/><path d="M4.900 13.700h11.800v11H4.900z M6.500 15.300v1.900h3.500v-1.900z M11.600 15.300v1.900h3.500v-1.900z M6.500 18.500v1.900h3.500v-1.900z M11.600 18.500v1.900h3.500v-1.900z M6.500 21.700v1.500h3.500v-1.500z M11.600 21.700v1.500h3.500v-1.500z" fill="#f1f1f1" fill-rule="evenodd"/></svg>
<div class="t" style="left:59.8px;top:63.88px;font-size:14.2px;color:#202124;line-height:14.2px;letter-spacing:0.213px;">Assam Judiciary Examination Trend Analysis</div>
<svg style="left:366.6px;top:63.5px;" width="15" height="15" viewBox="0 0 24 24"><path d="M22 9.24l-7.19-.62L12 2 9.19 8.63 2 9.24l5.46 4.73L5.82 21 12 17.27 18.18 21l-1.63-7.03L22 9.24zM12 15.4l-3.76 2.27 1-4.28-3.32-2.88 4.38-.38L12 6.1l1.71 4.04 4.38.38-3.32 2.88 1 4.28L12 15.4z" fill="#666a6e" stroke="#666a6e" stroke-width="0.500"/></svg>
<svg style="left:392px;top:65.5px;" width="13.5" height="11.5" viewBox="0 0 13.500 11.500"><path d="M1.800 1.800h3.400l1.300 1.300h5.200a0.900 0.900 0 0 1 0.900 0.900v5.800a0.900 0.900 0 0 1-0.900 0.900h-9.900a0.900 0.900 0 0 1-0.900-0.900v-7.100a0.900 0.900 0 0 1 0.900-0.900z" fill="none" stroke="#6d7175" stroke-width="1.500"/><path d="M0.900 1.800h4.500l1 1.500h-5.500z" fill="#6d7175"/><path d="M6.900 4.400l2.600 2.400-2.600 2.400v-1.700H4.200v-1.400h2.700z" fill="#6d7175"/></svg>
<div class="t" style="left:59px;top:87.99px;font-size:11px;color:#303336;line-height:11px;letter-spacing:0.092px;">File</div>
<div class="t" style="left:89px;top:87.99px;font-size:11px;color:#303336;line-height:11px;letter-spacing:0.348px;">Edit</div>
<div class="t" style="left:120.8px;top:87.99px;font-size:11px;color:#303336;line-height:11px;letter-spacing:0.618px;">View</div>
<div class="t" style="left:158px;top:87.99px;font-size:11px;color:#303336;line-height:11px;letter-spacing:0.498px;">Insert</div>
<div class="t" style="left:200px;top:87.99px;font-size:11px;color:#303336;line-height:11px;letter-spacing:0.532px;">Format</div>
<div class="t" style="left:249px;top:87.99px;font-size:11px;color:#303336;line-height:11px;letter-spacing:0.421px;">Data</div>
<div class="t" style="left:285.7px;top:87.99px;font-size:11px;color:#303336;line-height:11px;letter-spacing:0.655px;">Tools</div>
<div class="t" style="left:326.2px;top:87.99px;font-size:11px;color:#303336;line-height:11px;letter-spacing:0.388px;">Add-ons</div>
<div class="t" style="left:381.5px;top:87.99px;font-size:11px;color:#303336;line-height:11px;letter-spacing:0.292px;">Help</div>
<div class="t" style="left:423px;top:87.99px;font-size:11px;color:#70757a;line-height:11px;letter-spacing:0.219px;">Last edit was made yesterday at 12:31 by Ehtisham Ali</div>
<div style="left:423px;top:98.5px;width:278px;height:1px;background:#8f9398;"></div>
<div style="left:768.7px;top:66.6px;width:26.3px;height:26.3px;background:#f0177f;border-radius:50%;"></div>
<svg style="left:769.3px;top:67.5px;" width="25" height="25" viewBox="0 0 25 25"><ellipse cx="12.500" cy="9.500" rx="4.200" ry="5" fill="#fff"/><path d="M9 13c-1 3-3 4-5 4M11 14c0 3-1 5-3 6M14 14c0 3 1 5 3 6M16 13c1 3 3 4 5 4M12.500 14v7" stroke="#fff" stroke-width="1.500" fill="none" stroke-linecap="round"/></svg>
<div style="left:790.6px;top:66.0px;width:27.6px;height:27.6px;background:#7ccbdc;border-radius:50%;border:0.8px solid #fff;"></div>
<svg style="left:791.8px;top:67.5px;" width="25" height="25" viewBox="0 0 25 25"><path d="M4.500 13.500c0.500-3.500 3-6 6.500-6.800l3.500-2.700 0.300 2.500 3.500-1.800-1.300 3.300 2.500 2.800-1.800 0.700-0.700 2.500-3.200 0.500-1.500 2.500 1.500 4.500c-4.500 1-8.700-2.500-9.300-8z" fill="#fff"/></svg>
<svg style="left:812.5px;top:64px;" width="32" height="32" viewBox="0 0 32 32"><circle cx="15.600" cy="15.600" r="14" fill="#fff" stroke="#d3d6db" stroke-width="1.500"/></svg>
<svg style="left:819.5px;top:71.5px;" width="18" height="16" viewBox="0 0 18 16"><circle cx="5.700" cy="7.700" r="1.700" fill="#85888c"/><path d="M1.600 14v-1.300c0-1.500 2.200-2.300 4.100-2.300s4.100 0.800 4.100 2.300V14z" fill="#85888c"/><rect x="7.800" y="2.500" width="8.800" height="4.300" rx="1.500" fill="#85888c"/><circle cx="10.100" cy="4.650" r="0.750" fill="#fff"/><circle cx="12.200" cy="4.650" r="0.750" fill="#fff"/><circle cx="14.300" cy="4.650" r="0.750" fill="#fff"/></svg>
<svg style="left:857.8px;top:69.7px;" width="17.5" height="17.5" viewBox="0 0 18.500 18"><path d="M2 1h14.500a1.500 1.500 0 0 1 1.500 1.500V17l-3.500-3.500H2A1.500 1.500 0 0 1 .5 12V2.500A1.500 1.500 0 0 1 2 1z" fill="#5f6368"/><path d="M3.500 4h11.500v1.500H3.500z M3.500 6.700h11.500v1.500H3.500z M3.500 9.400h11.500v1.500H3.500z" fill="#fff"/></svg>
<svg style="left:892px;top:64px;" width="73.5" height="31" viewBox="0 0 73.500 31"><rect x="0.200" y="0.700" width="72.800" height="29.700" rx="3.300" fill="#1e8e3e"/></svg>
<svg style="left:902px;top:70px;" width="12.5" height="17" viewBox="0 0 12.500 17"><circle cx="6.250" cy="3.800" r="2.500" fill="#fff"/><path d="M1 11.500c0-2.800 2.500-4 5.250-4s5.250 1.200 5.250 4z" fill="#fff"/><path d="M1.200 14.800a1.600 1.600 0 1 1 3.200 0a1.600 1.600 0 1 1-3.200 0M4.600 14.800h3.300M8.100 14.800a1.600 1.600 0 1 1 3.200 0a1.600 1.600 0 1 1-3.200 0" stroke="#fff" stroke-width="0.800" fill="none"/></svg>
<div class="t" style="left:918.8px;top:73.82px;font-size:11.2px;color:#fff;line-height:11.2px;font-weight:bold;letter-spacing:0.018px;">Share</div>
<div style="left:981px;top:66.3px;width:26.5px;height:26.5px;background:#0b5345;border-radius:50%;"></div>
<div class="t" style="left:981px;top:72.33px;font-size:14.5px;color:#fff;line-height:14.5px;width:26.5px;text-align:center;">J</div>
<svg style="left:28.5px;top:115.5px;" width="15.5" height="15.5" viewBox="0 0 24 24"><path d="M12.5 8c-2.65 0-5.05.99-6.9 2.6L2 7v9h9l-3.62-3.62c1.39-1.16 3.16-1.88 5.12-1.88 3.54 0 6.55 2.31 7.6 5.5l2.37-.78C21.08 11.03 17.15 8 12.5 8z" fill="#5f6368" stroke="#5f6368" stroke-width="0.7" stroke-linejoin="round"/></svg>
<svg style="left:51.5px;top:115.5px;" width="15.5" height="15.5" viewBox="0 0 24 24"><path d="M18.4 10.6C16.55 8.99 14.15 8 11.5 8c-4.65 0-8.58 3.03-9.96 7.22L3.9 16c1.05-3.19 4.05-5.5 7.6-5.5 1.95 0 3.73.72 5.12 1.88L13 16h9V7l-3.6 3.6z" fill="#5f6368" stroke="#5f6368" stroke-width="0.7" stroke-linejoin="round"/></svg>
<svg style="left:74.8px;top:115px;" width="15.5" height="15.5" viewBox="0 0 24 24"><path d="M19 8H5c-1.66 0-3 1.34-3 3v6h4v4h12v-4h4v-6c0-1.66-1.34-3-3-3zm-3 11H8v-5h8v5zm3-7c-.55 0-1-.45-1-1s.45-1 1-1 1 .45 1 1-.45 1-1 1zm-1-9H6v4h12V3z" fill="#5f6368" stroke="#5f6368" stroke-width="0.7" stroke-linejoin="round"/></svg>
<svg style="left:97.9px;top:114.7px;" width="15" height="15" viewBox="0 0 24 24"><path d="M18 4V3c0-.55-.45-1-1-1H5c-.55 0-1 .45-1 1v4c0 .55.45 1 1 1h12c.55 0 1-.45 1-1V6h1v4H9v11c0 .55.45 1 1 1h2c.55 0 1-.45 1-1v-9h8V4h-3z" fill="#5f6368" stroke="#5f6368" stroke-width="0.7" stroke-linejoin="round"/></svg>
<svg style="left:119px;top:114px;" width="4" height="17" viewBox="0 0 4 17"><path d="M1.5 0.5V16.5" stroke="#dadce0" stroke-width="1"/></svg>
<svg style="left:180px;top:114px;" width="4" height="17" viewBox="0 0 4 17"><path d="M1.5 0.5V16.5" stroke="#dadce0" stroke-width="1"/></svg>
<svg style="left:311px;top:114px;" width="4" height="17" viewBox="0 0 4 17"><path d="M2 0.5V16.5" stroke="#dadce0" stroke-width="1"/></svg>
<svg style="left:405px;top:114px;" width="4" height="17" viewBox="0 0 4 17"><path d="M1.5 0.5V16.5" stroke="#dadce0" stroke-width="1"/></svg>
<svg style="left:467px;top:114px;" width="4" height="17" viewBox="0 0 4 17"><path d="M1.5 0.5V16.5" stroke="#dadce0" stroke-width="1"/></svg>
<svg style="left:567px;top:114px;" width="4" height="17" viewBox="0 0 4 17"><path d="M2.4 0.5V16.5" stroke="#dadce0" stroke-width="1"/></svg>
<svg style="left:662px;top:114px;" width="4" height="17" viewBox="0 0 4 17"><path d="M1.7 0.5V16.5" stroke="#dadce0" stroke-width="1"/></svg>
<svg style="left:798px;top:114px;" width="4" height="17" viewBox="0 0 4 17"><path d="M1.5 0.5V16.5" stroke="#dadce0" stroke-width="1"/></svg>
<div class="t" style="left:133.8px;top:117.52px;font-size:9.9px;color:#4a4e52;line-height:9.9px;letter-spacing:-0.674px;">100%</div>
<svg style="left:168px;top:121.3px;" width="6.5" height="3.5" viewBox="0 0 6.500 3.500"><path d="M0 0h6.500L3.250 3.500z" fill="#5f6368"/></svg>
<div class="t" style="left:194.3px;top:118.22px;font-size:9.9px;color:#4a4e52;line-height:9.9px;transform:scaleX(0.900);transform-origin:0 0;">$</div>
<div class="t" style="left:216.2px;top:117.82px;font-size:9.9px;color:#4a4e52;line-height:9.9px;transform:scaleX(0.840);transform-origin:0 0;">%</div>
<div class="t" style="left:235.5px;top:118.22px;font-size:9.9px;color:#4a4e52;line-height:9.9px;letter-spacing:-0.456px;">.0</div>
<svg style="left:242.5px;top:126.8px;" width="7" height="4" viewBox="0 0 7 4"><path d="M7 2H1.500M3 0.300L1.200 2 3 3.700" stroke="#44484c" stroke-width="1.200" fill="none"/></svg>
<div class="t" style="left:258px;top:118.22px;font-size:9.9px;color:#4a4e52;line-height:9.9px;letter-spacing:-0.281px;">.00</div>
<svg style="left:266.5px;top:126.8px;" width="7" height="4" viewBox="0 0 7 4"><path d="M0 2h5.500M4 0.300L5.800 2 4 3.700" stroke="#44484c" stroke-width="1.200" fill="none"/></svg>
<div class="t" style="left:280.4px;top:117.92px;font-size:9.9px;color:#4a4e52;line-height:9.9px;letter-spacing:-0.509px;">123</div>
<svg style="left:298.8px;top:121.3px;" width="6.5" height="3.5" viewBox="0 0 6.500 3.500"><path d="M0 0h6.500L3.250 3.500z" fill="#5f6368"/></svg>
<div class="t" style="left:326.8px;top:117.92px;font-size:9.9px;color:#4a4e52;line-height:9.9px;letter-spacing:-0.041px;">Default (Ari...</div>
<svg style="left:392.2px;top:121.3px;" width="6.5" height="3.5" viewBox="0 0 6.500 3.500"><path d="M0 0h6.500L3.250 3.500z" fill="#5f6368"/></svg>
<div class="t" style="left:419.8px;top:117.92px;font-size:9.9px;color:#4a4e52;line-height:9.9px;letter-spacing:-0.812px;">10</div>
<svg style="left:454.8px;top:121.3px;" width="6.5" height="3.5" viewBox="0 0 6.500 3.500"><path d="M0 0h6.500L3.250 3.500z" fill="#5f6368"/></svg>
<svg style="left:475.4px;top:115.8px;" width="15" height="15" viewBox="0 0 24 24"><path d="M15.6 10.79c.97-.67 1.65-1.77 1.65-2.79 0-2.26-1.75-4-4-4H7v14h7.04c2.09 0 3.71-1.7 3.71-3.79 0-1.52-.86-2.82-2.15-3.42zM10 6.5h3c.83 0 1.5.67 1.5 1.5s-.67 1.5-1.5 1.5h-3v-3zm3.5 9H10v-3h3.5c.83 0 1.5.67 1.5 1.5s-.67 1.5-1.5 1.5z" fill="#5f6368" stroke="#5f6368" stroke-width="0.7" stroke-linejoin="round"/></svg>
<svg style="left:498.7px;top:115.8px;" width="15" height="15" viewBox="0 0 24 24"><path d="M10 4v3h2.21l-3.42 8H6v3h8v-3h-2.21l3.42-8H18V4z" fill="#5f6368" stroke="#5f6368" stroke-width="0.7" stroke-linejoin="round"/></svg>
<div class="t" style="left:525.2px;top:116.96px;font-size:12.8px;color:#5f6368;line-height:12.8px;font-weight:bold;">S</div>
<svg style="left:523.3px;top:121.2px;" width="13" height="3" viewBox="0 0 13 3"><path d="M0 1.500H12.300" stroke="#5f6368" stroke-width="1.500"/></svg>
<svg style="left:544.7px;top:113.9px;" width="15.7" height="15.7" viewBox="0 0 24 24"><path d="M11 3L5.5 17h2.25l1.12-3h6.25l1.12 3h2.25L13 3h-2zm-1.38 9L12 5.67 14.38 12H9.62z" fill="#5f6368" stroke="#5f6368" stroke-width="0.5" stroke-linejoin="round"/></svg>
<svg style="left:544px;top:129.5px;" width="18" height="3.5" viewBox="0 0 18 3.500"><rect x="0.200" y="0.400" width="17.200" height="2.500" fill="#000"/></svg>
<svg style="left:577.3px;top:115.4px;" width="14.3" height="14.3" viewBox="0 0 24 24"><path d="M16.56 8.94L7.62 0 6.21 1.41l2.38 2.38-5.15 5.15c-.59.59-.59 1.54 0 2.12l5.5 5.5c.29.29.68.44 1.06.44s.77-.15 1.06-.44l5.5-5.5c.59-.58.59-1.53 0-2.12zM5.21 10L10 5.21 14.79 10H5.21zM19 11.5s-2 2.17-2 3.5c0 1.1.9 2 2 2s2-.9 2-2c0-1.33-2-3.5-2-3.5z" fill="#5f6368" stroke="#5f6368" stroke-width="0.4" stroke-linejoin="round"/></svg>
<svg style="left:603.2px;top:116.9px;" width="12.2" height="12.2" viewBox="0 0 12.200 12.200"><rect x="1.200" y="1.200" width="9.800" height="9.800" stroke="#5f6368" stroke-width="1.700" fill="none"/><path d="M6.100 1.200V11M1.200 6.100H11" stroke="#5f6368" stroke-width="1.600" fill="none"/></svg>
<svg style="left:627.5px;top:116.5px;" width="14" height="12" viewBox="0 0 14 12"><path d="M1 1h3.500M6 1h2M9.500 1h3.500M1 11h3.500M6 11h2M9.500 11h3.500M1 1v3M1 8v3M13 1v3M13 8v3" stroke="#bdc1c6" stroke-width="1.300" fill="none"/><path d="M1.500 6h3.500M3.800 4.500L5.300 6 3.800 7.500M12.500 6H9M10.200 4.500L8.700 6l1.500 1.500" stroke="#bdc1c6" stroke-width="1.100" fill="none"/></svg>
<svg style="left:649.5px;top:121.3px;" width="6.5" height="3.5" viewBox="0 0 6.500 3.500"><path d="M0 0h6.500L3.250 3.500z" fill="#bdc1c6"/></svg>
<svg style="left:672px;top:117px;" width="13" height="12" viewBox="0 0 13 12"><path d="M0 1.100H12.500M0 4.400H9M0 7.700H12.500M0 11H9" stroke="#5f6368" stroke-width="1.600" fill="none"/></svg>
<svg style="left:689.5px;top:121.3px;" width="6.5" height="3.5" viewBox="0 0 6.500 3.500"><path d="M0 0h6.500L3.250 3.500z" fill="#5f6368"/></svg>
<svg style="left:702.8px;top:115px;" width="15" height="15" viewBox="0 0 24 24"><path d="M16 13h-3V3h-2v10H8l4 4 4-4zM4 19v2h16v-2H4z" fill="#5f6368" stroke="#5f6368" stroke-width="0.7" stroke-linejoin="round"/></svg>
<svg style="left:720.8px;top:121.3px;" width="6.5" height="3.5" viewBox="0 0 6.500 3.500"><path d="M0 0h6.500L3.250 3.500z" fill="#5f6368"/></svg>
<svg style="left:736.5px;top:116.5px;" width="13" height="12.5" viewBox="0 0 13 12.500"><path d="M1.200 0.300v12M7.300 0.100v3.400M7.300 9.100v3.400" stroke="#5f6368" stroke-width="1.600" fill="none"/><path d="M3.400 6.300h6" stroke="#5f6368" stroke-width="1.400" fill="none"/><path d="M9.200 3.900l3 2.400-3 2.400z" fill="#5f6368"/></svg>
<svg style="left:752.8px;top:121.3px;" width="6.5" height="3.5" viewBox="0 0 6.500 3.500"><path d="M0 0h6.500L3.250 3.500z" fill="#5f6368"/></svg>
<svg style="left:766.8px;top:116px;" width="14.5" height="13" viewBox="0 0 14.500 13"><path d="M1.200 1.500l7.500 3.200-4.300 4.300z" stroke="#5f6368" stroke-width="1.300" fill="none" stroke-linejoin="round"/><path d="M4 12.500l9-9M13.200 3.300h-3.200M13.200 3.300v3.200" stroke="#5f6368" stroke-width="1.300" fill="none"/></svg>
<svg style="left:785.5px;top:121.3px;" width="6.5" height="3.5" viewBox="0 0 6.500 3.500"><path d="M0 0h6.500L3.250 3.500z" fill="#5f6368"/></svg>
<svg style="left:807.5px;top:115px;" width="15" height="15" viewBox="0 0 24 24"><path d="M6 10c-1.1 0-2 .9-2 2s.9 2 2 2 2-.9 2-2-.9-2-2-2zm12 0c-1.1 0-2 .9-2 2s.9 2 2 2 2-.9 2-2-.9-2-2-2zm-6 0c-1.1 0-2 .9-2 2s.9 2 2 2 2-.9 2-2-.9-2-2-2z" fill="#5f6368"/></svg>
<svg style="left:954.5px;top:114.5px;" width="17" height="17" viewBox="0 0 24 24"><path d="M12 8l-6 6 1.41 1.41L12 10.83l4.59 4.58L18 14z" fill="#3c4043"/></svg>
<div class="t" style="left:10.8px;top:139.3px;font-size:17px;color:#bdc0c4;line-height:17px;font-family:'Liberation Serif',serif;letter-spacing:0.7px;"><i>fx</i></div>
<svg style="left:35px;top:142px;" width="4" height="13" viewBox="0 0 4 13"><path d="M2.2 0.5V12.5" stroke="#d5d7da" stroke-width="1"/></svg>
<svg style="left:994.8px;top:122.5px;" width="13.5" height="14.5" viewBox="0 0 13.500 14.500"><path d="M1.500 1.500h10.500a1.300 1.300 0 0 1 1.300 1.300v10.200a1.300 1.300 0 0 1-1.300 1.300H1.500A1.300 1.300 0 0 1 .2 13V2.800A1.300 1.300 0 0 1 1.500 1.500z" fill="#2a7de1"/><rect x="0.200" y="0.500" width="13.100" height="2.500" rx="1" fill="#a9c7f5"/><text x="6.750" y="11.800" font-size="8" fill="#fff" text-anchor="middle" font-family="Liberation Sans, sans-serif">31</text></svg>
<svg style="left:994.8px;top:169.5px;" width="13.5" height="13.5" viewBox="0 0 13.500 13.500"><path d="M1.500 0h10.500a1.500 1.500 0 0 1 1.500 1.500v8l-4 4H1.500A1.500 1.500 0 0 1 0 12V1.500A1.500 1.500 0 0 1 1.500 0z" fill="#f9b50b"/><path d="M6.750 2.800a2.700 2.700 0 0 0-1.500 4.900v1.300h3v-1.300a2.700 2.700 0 0 0-1.500-4.900z M5.500 9.800h2.500v0.900h-2.500z" fill="none" stroke="#fff" stroke-width="0.900"/></svg>
<svg style="left:993.5px;top:214.5px;" width="16" height="16" viewBox="0 0 16 16"><circle cx="8" cy="8" r="7.500" fill="#3b7de9"/><path d="M4.500 10.200l5.800-5.600 1.600 1.600-5.800 5.600z" fill="#fff"/><circle cx="4.600" cy="8" r="1" fill="#fbbc04"/></svg>
<svg style="left:41px;top:523.5px;" width="10" height="10" viewBox="0 0 10 10"><path d="M4.700 0.300V9.300M0.200 4.800H9.200" stroke="#5f6368" stroke-width="1.500" fill="none"/></svg>
<svg style="left:66px;top:524px;" width="11" height="9.5" viewBox="0 0 11 9.500"><path d="M0 0h11v1.600H0z M0 2.600h11v1.600H0z M0 5.200h11v1.600H0z M0 7.800h11v1.600H0z" fill="#5f6368"/></svg>
<div style="left:86.5px;top:514px;width:6.5px;height:32px;background:linear-gradient(90deg,rgba(0,0,0,0.02),rgba(0,0,0,0.120));"></div>
<div style="left:91px;top:515px;width:20px;height:28px;overflow:hidden">
<div class="t" style="left:-5.1px;top:7.54px;font-size:12px;color:#85898e;line-height:12px;-webkit-text-stroke:0.28px currentColor;letter-spacing:0.131px;">Act</div>
</div>
<svg style="left:110.8px;top:526.7px;" width="6.5" height="3.5" viewBox="0 0 6.500 3.500"><path d="M0 0h6.500L3.250 3.500z" fill="#85898e"/></svg>
<svg style="left:128px;top:514px;" width="4" height="32" viewBox="0 0 4 32"><path d="M2.2 0V32" stroke="#e4e6e8" stroke-width="1"/></svg>
<div class="t" style="left:157px;top:522.54px;font-size:12px;color:#85898e;line-height:12px;-webkit-text-stroke:0.28px currentColor;letter-spacing:0.068px;">Assamese</div>
<svg style="left:221.2px;top:526.7px;" width="6.5" height="3.5" viewBox="0 0 6.500 3.500"><path d="M0 0h6.500L3.250 3.500z" fill="#85898e"/></svg>
<div style="left:241px;top:514px;width:215px;height:32px;background:#fff;box-shadow:0 0 1.5px rgba(0,0,0,0.120);"></div>
<div class="t" style="left:255.2px;top:522.54px;font-size:12px;color:#2b9a55;line-height:12px;-webkit-text-stroke:0.28px currentColor;letter-spacing:0.289px;">Chapter on the Basis of Marks</div>
<svg style="left:435.5px;top:526.7px;" width="6.5" height="3.5" viewBox="0 0 6.500 3.500"><path d="M0 0h6.500L3.250 3.500z" fill="#1e8e3e"/></svg>
<div class="t" style="left:469.8px;top:522.54px;font-size:12px;color:#85898e;line-height:12px;-webkit-text-stroke:0.28px currentColor;letter-spacing:0.295px;">SheetC</div>
<svg style="left:519.2px;top:526.7px;" width="6.5" height="3.5" viewBox="0 0 6.500 3.500"><path d="M0 0h6.500L3.250 3.500z" fill="#85898e"/></svg>
<svg style="left:537px;top:514px;" width="4" height="32" viewBox="0 0 4 32"><path d="M1.5 0V32" stroke="#e4e6e8" stroke-width="1"/></svg>
<div class="t" style="left:552.5px;top:522.54px;font-size:12px;color:#85898e;line-height:12px;-webkit-text-stroke:0.28px currentColor;letter-spacing:0.155px;">SheetD</div>
<svg style="left:601.5px;top:526.7px;" width="6.5" height="3.5" viewBox="0 0 6.500 3.500"><path d="M0 0h6.500L3.250 3.500z" fill="#85898e"/></svg>
<svg style="left:619px;top:514px;" width="4" height="32" viewBox="0 0 4 32"><path d="M1.8 0V32" stroke="#e4e6e8" stroke-width="1"/></svg>
<div class="t" style="left:635px;top:522.54px;font-size:12px;color:#85898e;line-height:12px;-webkit-text-stroke:0.28px currentColor;letter-spacing:-0.073px;">SheetE</div>
<svg style="left:682.2px;top:526.7px;" width="6.5" height="3.5" viewBox="0 0 6.500 3.500"><path d="M0 0h6.500L3.250 3.500z" fill="#85898e"/></svg>
<svg style="left:715.5px;top:523.5px;" width="5.5" height="8.5" viewBox="0 0 5.500 8.500"><path d="M5.500 0v8.500L0 4.250z" fill="#3c4043"/></svg>
<svg style="left:741.5px;top:523.5px;" width="5.5" height="8.5" viewBox="0 0 5.500 8.500"><path d="M0 0v8.500L5.500 4.250z" fill="#bdc1c6"/></svg>
<div style="left:892px;top:513.5px;width:86px;height:32.5px;background:#fff;border-left:1px solid #dadce0;"></div>
<svg style="left:902px;top:521px;" width="15.5" height="16.5" viewBox="0 0 15.500 16.500"><path d="M1.500 0h12.500a1.500 1.500 0 0 1 1.500 1.500v11a1.500 1.500 0 0 1-1.500 1.500h-4l-2.250 2.500L5.500 14h-4A1.500 1.500 0 0 1 0 12.500v-11A1.500 1.500 0 0 1 1.500 0z" fill="#1ea352"/><path d="M7.750 2.800l1.300 3 3 1.300-3 1.300-1.300 3-1.300-3-3-1.300 3-1.300z" fill="#fff"/></svg>
<div class="t" style="left:928.2px;top:523.66px;font-size:10.8px;color:#2aa257;line-height:10.8px;-webkit-text-stroke:0.2px currentColor;letter-spacing:-0.637px;">Explore</div>
<svg style="left:992.7px;top:515px;" width="15.5" height="15.5" viewBox="0 0 24 24"><path d="M10 6L8.59 7.41 13.17 12l-4.58 4.59L10 18l6-6z" fill="#5f6368"/></svg>
<div style="left:968px;top:478px;width:10px;height:35px;background:#f8f9fa;border:1px solid #e2e2e2;"></div>
<div style="left:968px;top:490px;width:10px;height:1px;background:#e2e2e2;"></div>
<div style="left:968px;top:502px;width:10px;height:1px;background:#e2e2e2;"></div>
<svg style="left:970.8px;top:482.3px;" width="4.5" height="3" viewBox="0 0 4.500 3"><path d="M0 3h4.500L2.250 0z" fill="#9aa0a6"/></svg>
<svg style="left:970.8px;top:495.0px;" width="4.5" height="3" viewBox="0 0 4.500 3"><path d="M0 0h4.500L2.250 3z" fill="#9aa0a6"/></svg>
<div style="left:943px;top:503.5px;width:25px;height:9.5px;background:#f8f9fa;border:1px solid #e4e4e4;"></div>
<svg style="left:954px;top:503px;" width="4" height="10" viewBox="0 0 4 10"><path d="M1.5 0.5V10" stroke="#e4e4e4" stroke-width="1"/></svg>
<svg style="left:947.8px;top:505.8px;" width="3" height="4.5" viewBox="0 0 3 4.500"><path d="M3 0v4.500L0 2.250z" fill="#9aa0a6"/></svg>
<svg style="left:960.2px;top:505.8px;" width="3" height="4.5" viewBox="0 0 3 4.500"><path d="M0 0v4.500L3 2.250z" fill="#9aa0a6"/></svg>
<div style="left:0px;top:546px;width:36px;height:30px;background:#111;"></div>
<svg style="left:12px;top:554.5px;" width="12.5" height="12.5" viewBox="0 0 12.500 13"><path d="M0 1.800l5-0.700v5H0z M5.800 1l6.700-1v6.100H5.800z M0 6.900h5v5l-5-0.700z M5.800 6.900h6.700V13l-6.700-1z" fill="#fff"/></svg>
<div style="left:36px;top:546px;width:258px;height:29px;background:#f2f2f2;border-top:1px solid #cfcfcf;"></div>
<svg style="left:44.5px;top:554.5px;" width="13" height="13" viewBox="0 0 13 13"><circle cx="8" cy="5" r="3.900" stroke="#3a3a3a" stroke-width="1.200" fill="none"/><path d="M5.200 7.800L1 12" stroke="#3a3a3a" stroke-width="1.300"/></svg>
<div class="t" style="left:66.5px;top:555.04px;font-size:12px;color:#4b4b4b;line-height:12px;letter-spacing:-0.615px;">Type here to search</div>
<svg style="left:305.5px;top:555px;" width="12" height="12" viewBox="0 0 12 12"><circle cx="6" cy="6" r="4.800" stroke="#fff" stroke-width="1.600" fill="none"/></svg>
<svg style="left:341.5px;top:554.8px;" width="13.5" height="12.5" viewBox="0 0 13.500 12.500"><path d="M1.700 2.800h6.800v6.900H1.700z" stroke="#f0f0f0" stroke-width="1" fill="none"/><path d="M0.300 2.800h9.800M0.300 9.700h9.800M1.700 0.800v11M8.500 0.800v11" stroke="#f0f0f0" stroke-width="0.800" fill="none"/><path d="M11.800 1.500v2M11.800 5v6" stroke="#f0f0f0" stroke-width="1.100" fill="none"/></svg>
<svg style="left:378px;top:552px;" width="16.5" height="17.5" viewBox="2 2 20 21.500"><path d="M2.740 10.810c.420-3.930 3.130-8.210 8.960-8.210 5.970 0 9.090 4.340 9.090 8.850v2.250H8.360c.060 3.510 3.500 4.590 5.580 4.590 2.790 0 5.280-1.320 5.280-1.320v4.230s-2.520 1.600-6.630 1.600c-4.800 0-8.600-3-8.600-8.300 0-3.410 1.970-5.950 4.020-7.170-1.870 1.570-2.300 3.500-2.300 3.500h9.260s.540-4.720-3.700-4.720c-4.020 0-7.420 2.880-8.530 4.700z" fill="#1380db"/></svg>
<svg style="left:414.7px;top:553.5px;" width="15.8" height="14.2" viewBox="0 0 17.500 15"><path d="M0 1.500h6l1.500 1.500H17v2H0z" fill="#e8a33d"/><path d="M0 4h17.500v10.500H0z" fill="#f9d261"/><path d="M3 9.500h11.500V14.500H3z" fill="#3d93d6"/><path d="M5.500 11.500h6.500v3H5.500z" fill="#f9d261"/></svg>
<svg style="left:450px;top:551.5px;" width="18" height="18" viewBox="0 0 18 18"><path d="M5.500 5V3.500a3.500 3.500 0 0 1 7 0V5" stroke="#fff" stroke-width="1.100" fill="none"/><path d="M0.500 5h17v12.500h-17z" fill="#f5f5f5"/><rect x="5" y="7.500" width="3.600" height="3.600" fill="#f25022"/><rect x="9.400" y="7.500" width="3.600" height="3.600" fill="#7fba00"/><rect x="5" y="11.900" width="3.600" height="3.600" fill="#00a4ef"/><rect x="9.400" y="11.900" width="3.600" height="3.600" fill="#ffb900"/></svg>
<svg style="left:486.5px;top:552.5px;" width="19" height="16" viewBox="0 0 19 16"><path d="M0 6L9.500 0L19 6v10H0z" fill="#1173c6"/><path d="M0 6l9.500 5.500L19 6v10H0z" fill="#3aa0f3"/><path d="M0 6l9.500 5.500L19 6" stroke="#cfe6fb" stroke-width="0.800" fill="none"/></svg>
<div style="left:515px;top:547px;width:36px;height:29px;background:#474747;"></div>
<div style="left:515px;top:574px;width:36px;height:2px;background:#95d47a;"></div>
<svg style="left:524.5px;top:552.5px;" width="17" height="17" viewBox="0 0 17 17"><circle cx="8.500" cy="8.500" r="8.500" fill="#db4437"/><path d="M8.500 8.500L1.140 4.250A8.500 8.500 0 0 0 4.250 15.860z" fill="#0f9d58"/><path d="M8.500 8.500l-4.250 7.360A8.500 8.500 0 0 0 17 8.500A8.500 8.500 0 0 0 15.860 4.250H8.500z" fill="#ffcd40"/><path d="M8.500 8.500L1.140 4.250A8.500 8.500 0 0 1 15.860 4.250z" fill="#db4437"/><circle cx="8.500" cy="8.500" r="3.900" fill="#f1f1f1"/><circle cx="8.500" cy="8.500" r="3.100" fill="#4285f4"/></svg>
<svg style="left:561px;top:553px;" width="17.5" height="16" viewBox="0 0 17.500 16"><rect x="7" y="1.500" width="10" height="13" fill="#fff"/><path d="M9 4h7M9 6.200h7M9 8.400h7M9 10.600h7M9 12.800h7" stroke="#2b579a" stroke-width="0.800"/><path d="M0 1.500L10 0v16L0 14.500z" fill="#2b579a"/><text x="5" y="11" font-size="7.500" font-weight="bold" fill="#fff" text-anchor="middle" font-family="Liberation Sans, sans-serif">W</text></svg>
<svg style="left:597.5px;top:552.5px;" width="17.5" height="17.5" viewBox="0 0 17.500 17.500"><circle cx="8.750" cy="8.750" r="8.750" fill="#f8a51b"/><path d="M8.750 0A8.750 8.750 0 0 0 1 13l7.750-4.250z" fill="#29abe2"/><path d="M8.750 0A8.750 8.750 0 0 1 17.500 8.750L8.750 8.750z" fill="#ee3a43"/><circle cx="8.750" cy="8.750" r="5.200" fill="#fff"/><path d="M7 8h3.500v3.300H7z" fill="#2f3b55"/><path d="M7.600 8V6.900a1.150 1.150 0 0 1 2.300 0V8" stroke="#2f3b55" stroke-width="0.800" fill="none"/></svg>
<svg style="left:849.5px;top:557px;" width="10" height="6" viewBox="0 0 10 6"><path d="M0.500 5.500L5 1l4.500 4.500" stroke="#fff" stroke-width="1.200" fill="none"/></svg>
<svg style="left:866px;top:556px;" width="13.5" height="8.5" viewBox="0 0 13.500 8.500"><rect x="3.500" y="1.500" width="8.500" height="5.500" stroke="#fff" stroke-width="1" fill="none"/><rect x="12.300" y="3" width="1.200" height="2.500" fill="#fff"/><path d="M0 2.500h2.500v3.500H0z M1 0.500v2M1 6v2.500" fill="#fff" stroke="#fff" stroke-width="0.800"/></svg>
<svg style="left:884px;top:556.5px;" width="13.5" height="8" viewBox="0 0 13.500 8"><path d="M3.300 8a3 3 0 0 1-.3-6 4 4 0 0 1 7.300-.3A3.200 3.200 0 0 1 10.500 8z" fill="#e8e8e8"/></svg>
<svg style="left:904px;top:555.5px;" width="11.5" height="10.5" viewBox="0 0 11.500 10.500"><path d="M1 10A9 9 0 0 1 10.500 1M3.200 10A6.500 6.500 0 0 1 10.500 3.600M5.500 10A4 4 0 0 1 10.500 6.200M8.200 10A1.800 1.800 0 0 1 10.500 8.400" stroke="#d0d0d0" stroke-width="0.900" fill="none"/></svg>
<svg style="left:920px;top:555.5px;" width="13.5" height="11" viewBox="0 0 13.500 11"><path d="M0.500 3.800h2.500L6 1v9L3 7.200H.5z" stroke="#fff" stroke-width="0.900" fill="none"/><path d="M8 3.500a3 3 0 0 1 0 4M9.800 2a5 5 0 0 1 0 7M11.600 0.700a7 7 0 0 1 0 9.600" stroke="#fff" stroke-width="0.800" fill="none"/></svg>
<div class="t" style="left:943.8px;top:549.17px;font-size:9.6px;color:#ececec;line-height:9.6px;letter-spacing:-0.64px;">6:11 PM</div>
<div class="t" style="left:940.5px;top:563.07px;font-size:9.6px;color:#ececec;line-height:9.6px;letter-spacing:-0.399px;">18-Apr-20</div>
<svg style="left:992.5px;top:554.5px;" width="19" height="18" viewBox="0 0 19 18"><path d="M0.500 0.500h12v9.500H5l-2.500 2.500V10H.5z" fill="#f4f4f4"/><path d="M2.500 3h8M2.500 5.200h8M2.500 7.400h5" stroke="#1b1b1b" stroke-width="0.800"/><circle cx="12.500" cy="11.500" r="5" fill="#1c1c1c" stroke="#bbb" stroke-width="0.800"/><text x="12.500" y="14.500" font-size="8.500" fill="#fff" text-anchor="middle" font-family="Liberation Sans, sans-serif">1</text></svg>
<svg style="left:1019px;top:546px;" width="4" height="30" viewBox="0 0 4 30"><path d="M1.5 0.5V30" stroke="#6a6a6a" stroke-width="0.8"/></svg>
</body></html>
